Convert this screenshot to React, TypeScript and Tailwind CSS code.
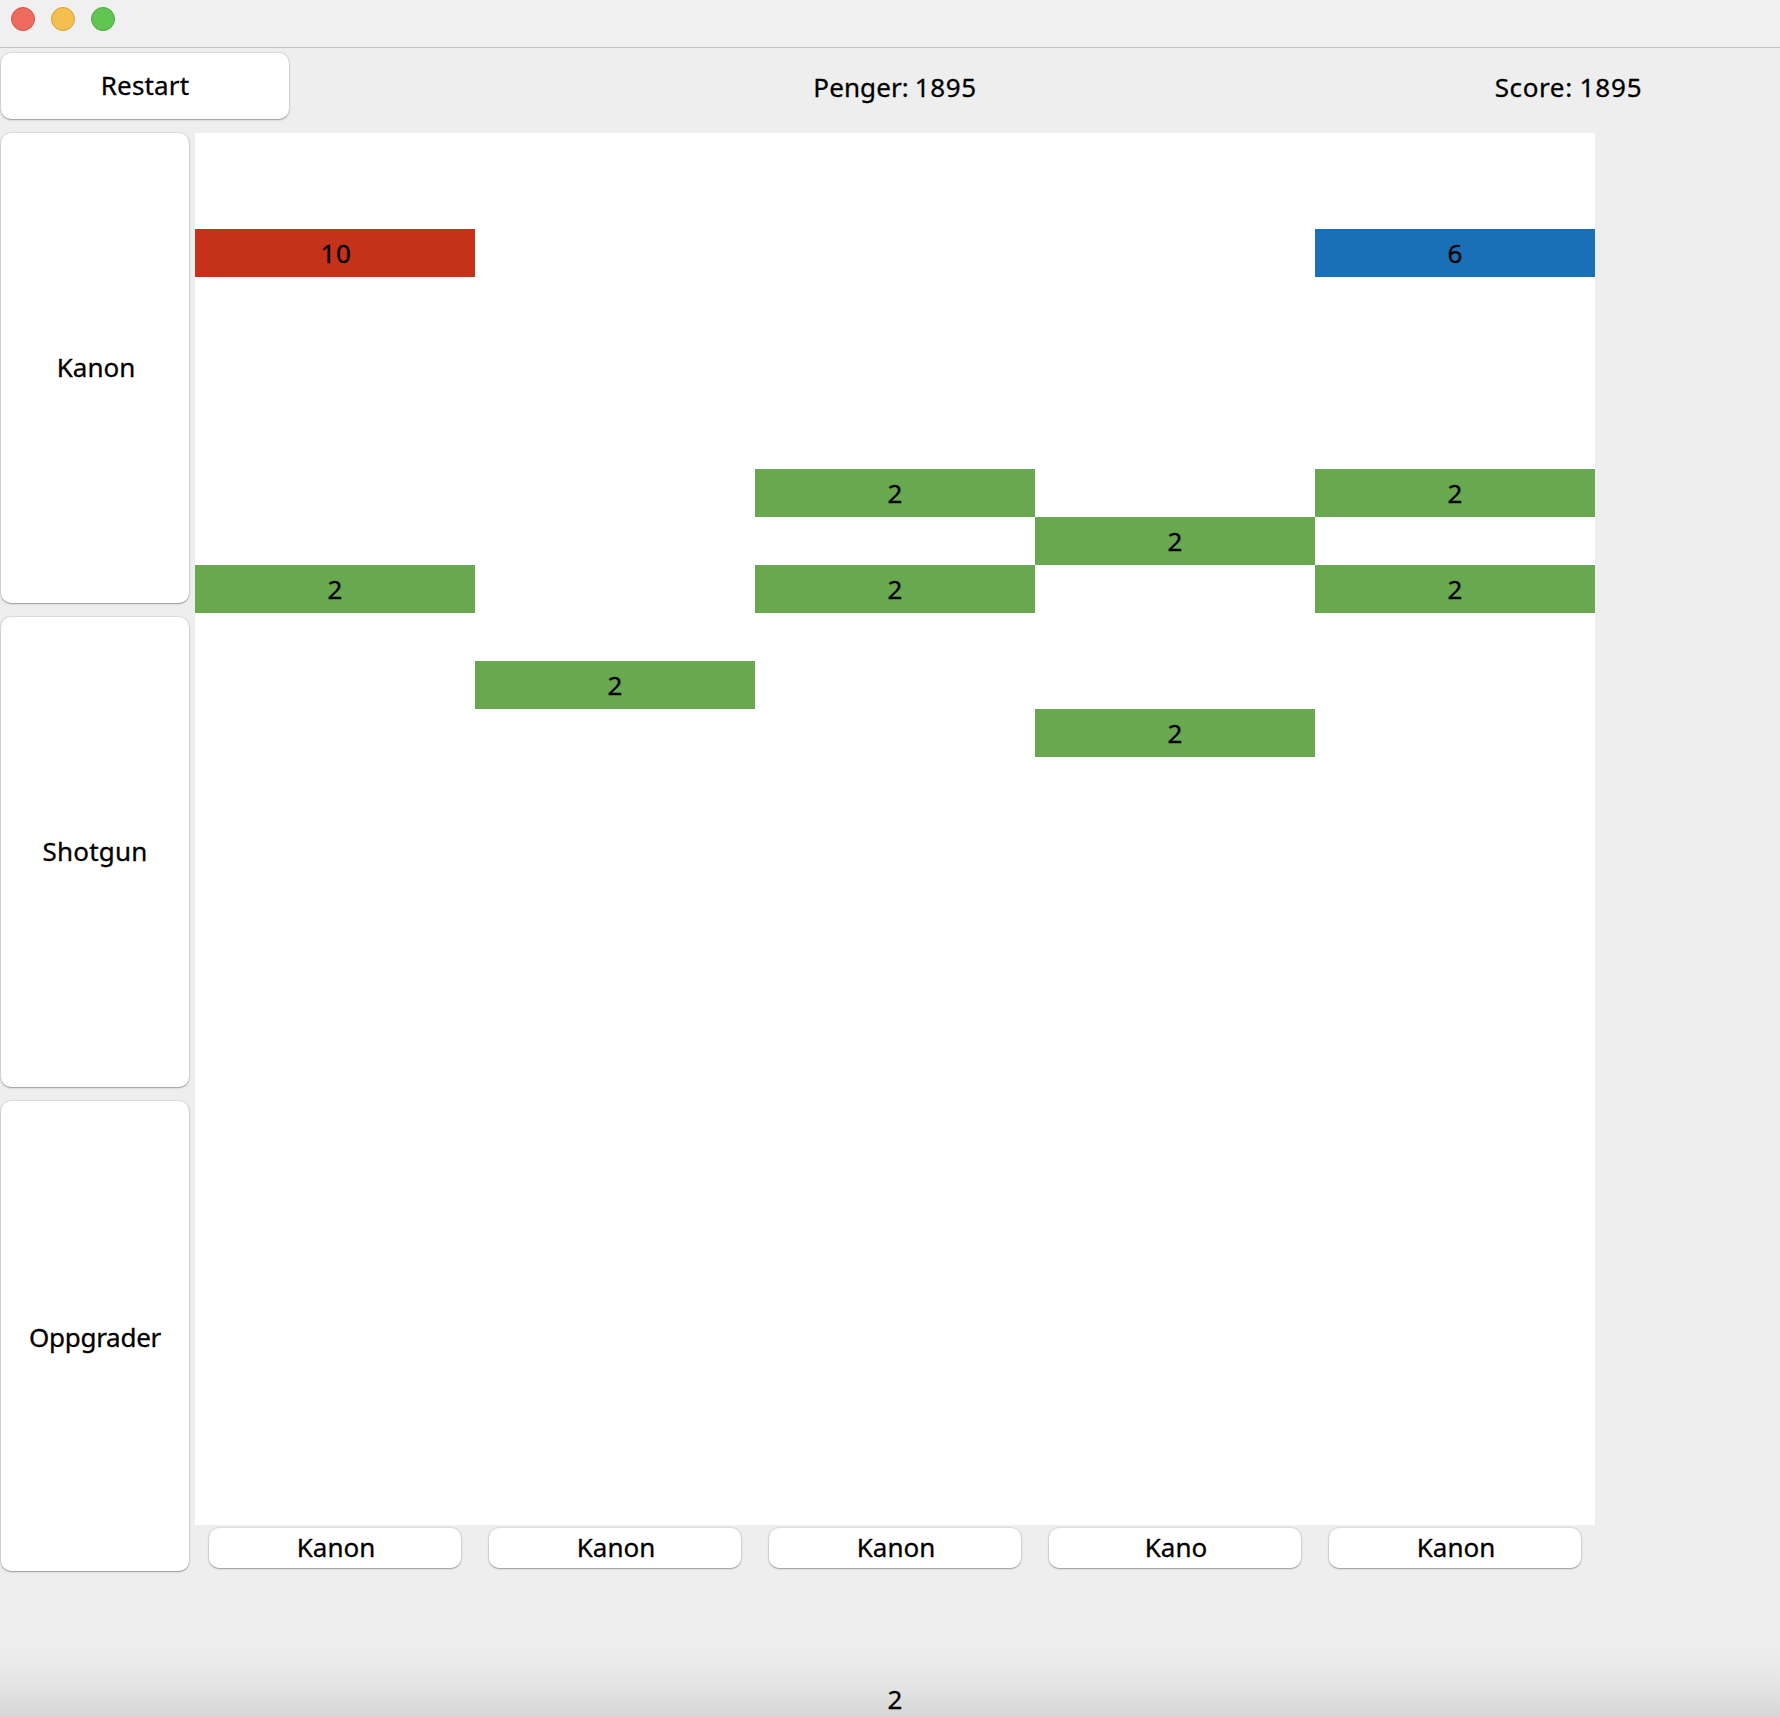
type Block = { row: number; col: number; hp: number; color: string };

const GREEN = "bg-[#6aa84f]";
const ROWS = 29;
const COLS = 5;

const blocks: Block[] = [
  { row: 2, col: 0, hp: 10, color: "bg-[#c4321a]" },
  { row: 2, col: 4, hp: 6, color: "bg-[#1a70b7]" },
  { row: 7, col: 2, hp: 2, color: GREEN },
  { row: 7, col: 4, hp: 2, color: GREEN },
  { row: 8, col: 3, hp: 2, color: GREEN },
  { row: 9, col: 0, hp: 2, color: GREEN },
  { row: 9, col: 2, hp: 2, color: GREEN },
  { row: 9, col: 4, hp: 2, color: GREEN },
  { row: 11, col: 1, hp: 2, color: GREEN },
  { row: 12, col: 3, hp: 2, color: GREEN },
];

const sideButtons = [
  { label: "Kanon", text: "pb-0.5 pl-0.5" },
  { label: "Shotgun", text: "pb-0.5 tracking-[0.2px]" },
  { label: "Oppgrader", text: "pt-px tracking-[-0.25px]" },
];

const slotButtons = ["Kanon", "Kanon", "Kanon", "Kano", "Kanon"];

function AquaButton({ label, className }: { label: string; className: string }) {
  return (
    <button
      className={`flex items-center justify-center rounded-[10px] bg-white whitespace-nowrap shadow-[0_0_0_1px_rgba(0,0,0,0.06),0_1px_1px_rgba(0,0,0,0.2),0_1px_3px_rgba(0,0,0,0.12)] ${className}`}
    >
      {label}
    </button>
  );
}

function TitleBar() {
  return (
    <div className="flex h-12 shrink-0 gap-4 border-b border-[#c5c5c5] bg-[#f0f0f0] pt-[7px] pl-[11px]">
      <span className="size-6 rounded-full border border-[#d3544a] bg-[#ed6a5f]" />
      <span className="size-6 rounded-full border border-[#d8a03d] bg-[#f5bf4f]" />
      <span className="size-6 rounded-full border border-[#50a73e] bg-[#61c554]" />
    </div>
  );
}

export default function App() {
  const cells = Array.from({ length: ROWS * COLS }, (_, i) =>
    blocks.find((b) => b.row * COLS + b.col === i),
  );

  return (
    <div className="flex h-[1717px] w-[1780px] flex-col overflow-hidden bg-[#eeeeee] font-['Noto_Sans',sans-serif] text-[26px] leading-[34px] text-black [-webkit-text-stroke:0.3px_black]">
      <TitleBar />

      <header className="flex h-[85px] shrink-0 pt-[5px] pl-px">
        <AquaButton label="Restart" className="h-[66px] w-[288px] pb-0.5 tracking-[0.15px]" />
        <div className="ml-[106px] w-[1000px] pt-[17px] text-center tracking-[0.1px] [word-spacing:-0.9px]">
          Penger: <span className="tracking-[0.6px]">1895</span>
        </div>
        <div className="w-[347px] pt-[17px] text-center tracking-[0.62px] [word-spacing:-0.5px]">
          Score: <span className="tracking-[0.8px]">1895</span>
        </div>
      </header>

      <main className="flex shrink-0 pl-px">
        <div className="flex w-[188px] flex-col gap-3.5">
          {sideButtons.map((b) => (
            <AquaButton key={b.label} label={b.label} className={`h-[470px] w-full ${b.text}`} />
          ))}
        </div>

        <div className="ml-1.5 flex w-[1400px] flex-col">
          <div className="grid auto-rows-[48px] grid-cols-5 bg-white">
            {cells.map((b, i) => (
              <div
                key={i}
                className={`flex items-center justify-center ${b ? b.color : ""} ${b && b.hp === 10 ? "pl-0.5 tracking-[0.7px]" : ""}`}
              >
                {b?.hp}
              </div>
            ))}
          </div>
          <div className="grid grid-cols-5 pt-[3px]">
            {slotButtons.map((label, i) => (
              <AquaButton key={i} label={label} className="ml-3.5 h-10 w-[252px] pb-0.5 pl-0.5" />
            ))}
          </div>
        </div>
      </main>

      <footer className="mt-auto flex h-[77px] shrink-0 justify-center bg-[linear-gradient(to_bottom,#eeeeee_0%,#eaeaea_35%,#e1e1e1_68%,#d6d6d6_100%)] pt-[42px] pl-2.5">
        2
      </footer>
    </div>
  );
}
